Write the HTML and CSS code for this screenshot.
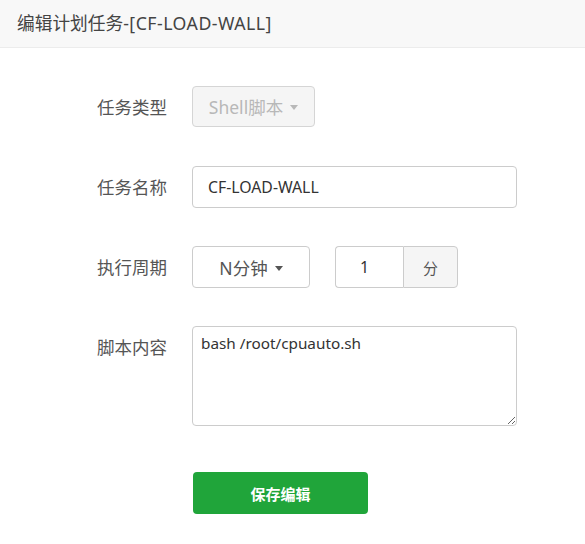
FILE: index.html
```html
<!DOCTYPE html>
<html lang="zh-CN">
<head>
<meta charset="utf-8">
<title>编辑计划任务</title>
<link rel="stylesheet" href="styles.css">
</head>
<body>
<div class="header">编辑计划任务<span class="header-code">-[CF-LOAD-WALL]</span></div>
<form class="form">
  <div class="row">
    <span class="label">任务类型</span>
    <div class="select select-disabled">Shell脚本<i class="caret"></i></div>
  </div>
  <div class="row">
    <span class="label">任务名称</span>
    <input class="input input-name" type="text" value="CF-LOAD-WALL">
  </div>
  <div class="row">
    <span class="label">执行周期</span>
    <div class="select select-period">N分钟<i class="caret"></i></div>
    <div class="group">
      <input class="input input-num" type="text" value="1">
      <span class="addon">分</span>
    </div>
  </div>
  <div class="row row-area">
    <span class="label">脚本内容</span>
    <textarea class="area">bash /root/cpuauto.sh</textarea>
  </div>
  <div class="actions">
    <button type="button" class="btn">保存编辑</button>
  </div>
</form>
</body>
</html>
```

FILE: styles.css
```css
* { box-sizing: border-box; }
html, body { margin: 0; padding: 0; background: #fff; }
body {
  font-family: "Noto Sans", "Noto Sans CJK SC", sans-serif;
  color: #555;
}
.header {
  height: 48px;
  line-height: 47px;
  padding-left: 17px;
  background: #f8f8f8;
  border-bottom: 1px solid #ececec;
  font-size: 17.7px;
  color: #444;
}
.header-code { letter-spacing: 0.5px; }
.form {
  padding: 38px 0 0 97px;
}
.row {
  display: flex;
  align-items: flex-start;
  height: 42px;
  margin-bottom: 38px;
}
.row-area { height: 100px; margin-bottom: 46px; }
.label {
  width: 70px;
  margin-right: 25px;
  line-height: 42px;
  font-size: 17.5px;
  color: #555;
  white-space: nowrap;
}
.select {
  height: 42px;
  border: 1px solid #ccc;
  border-radius: 4px;
  background: #fff;
  display: flex;
  align-items: center;
  justify-content: center;
  font-size: 17.5px;
  color: #555;
}
.select-disabled {
  width: 123px;
  height: 41px;
  background: #f5f5f5;
  color: #b8b8b8;
  border-color: #d5d5d5;
}
.select-period { width: 118px; margin-right: 25px; }
.caret {
  display: inline-block;
  width: 0; height: 0;
  margin-left: 7px;
  margin-top: 2px;
  border-left: 4.5px solid transparent;
  border-right: 4.5px solid transparent;
  border-top: 5px solid currentColor;
}
.input {
  height: 42px;
  border: 1px solid #ccc;
  border-radius: 4px;
  font-family: inherit;
  font-size: 15.8px;
  color: #333;
  padding: 0 15px;
  outline: none;
}
.input-name { width: 325px; }
.group { display: flex; }
.input-num {
  width: 68px;
  border-radius: 4px 0 0 4px;
  border-right: none;
  padding: 0 0 0 24px;
}
.addon {
  width: 55px;
  height: 42px;
  border: 1px solid #ccc;
  border-radius: 0 4px 4px 0;
  background: #f5f5f5;
  display: flex;
  align-items: center;
  justify-content: center;
  font-size: 15px;
  color: #555;
}
.area {
  width: 325px;
  height: 100px;
  border: 1px solid #ccc;
  border-radius: 4px;
  padding: 6px 8px;
  font-family: inherit;
  font-size: 15.3px;
  color: #333;
  resize: vertical;
  outline: none;
}
.actions { padding-left: 96px; }
.btn {
  width: 175px;
  height: 42px;
  border: none;
  border-radius: 4px;
  background: #20a53a;
  color: #fff;
  font-family: inherit;
  font-size: 15px;
  font-weight: bold;
}
```
